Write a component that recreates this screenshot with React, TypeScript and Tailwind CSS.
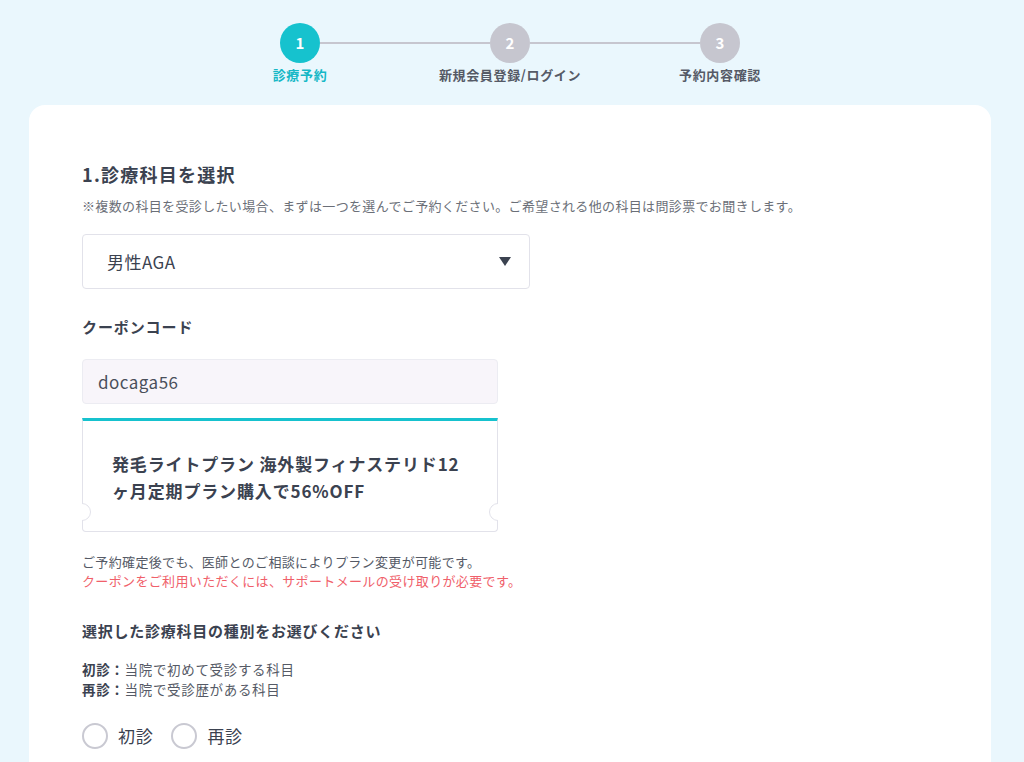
import { useState } from "react";

const FONT = { fontFamily: '"Noto Sans CJK JP", "Noto Sans", sans-serif' };

const STEPS = ["診療予約", "新規会員登録/ログイン", "予約内容確認"];

function Stepper() {
  return (
    <div className="pt-[23px] pb-[20px]">
      <div className="flex items-center ml-[280px] w-[460px]">
        {STEPS.map((_, i) => (
          <div key={i} className={`flex items-center ${i < 2 ? "flex-1" : ""}`}>
            <div
              className={`w-[40px] h-[40px] rounded-full flex items-center justify-center text-white font-bold text-[15px] ${
                i === 0 ? "bg-[#16c2ce]" : "bg-[#c6c6cf]"
              }`}
            >
              {i + 1}
            </div>
            {i < 2 && <div className="flex-1 h-[2px] bg-[#c6c6cf]" />}
          </div>
        ))}
      </div>
      <div className="flex ml-[195px] mt-[2px]">
        {STEPS.map((s, i) => (
          <div
            key={s}
            className={`w-[210px] text-center text-[13px] font-bold leading-[20px] tracking-[0.05em] ${
              i === 0 ? "text-[#16b8c6]" : "text-[#555a66]"
            }`}
          >
            {s}
          </div>
        ))}
      </div>
    </div>
  );
}

function Notch({ side }: { side: "left" | "right" }) {
  return (
    <span
      className={`absolute top-[82px] w-[18px] h-[18px] rounded-full border border-[#e2e2ea] bg-white ${
        side === "left"
          ? "left-[-10px] [clip-path:inset(0_0_0_50%)]"
          : "right-[-10px] [clip-path:inset(0_50%_0_0)]"
      }`}
    />
  );
}

function Radio({ label, checked, onClick }: { label: string; checked: boolean; onClick: () => void }) {
  return (
    <button onClick={onClick} className="flex items-center gap-[10px]">
      <span className="w-[26px] h-[26px] rounded-full border-2 border-[#c9c9d2] bg-white flex items-center justify-center">
        {checked && <span className="w-[12px] h-[12px] rounded-full bg-[#16c2ce]" />}
      </span>
      <span className="text-[17px] text-[#3b4250] leading-[26px] tracking-[0.04em]">{label}</span>
    </button>
  );
}

export default function App() {
  const [visit, setVisit] = useState<"first" | "return" | null>(null);

  return (
    <div className="min-h-[762px] bg-[#eaf7fd] overflow-hidden" style={FONT}>
      <Stepper />
      <div className="ml-[29px] w-[962px] bg-white rounded-t-2xl pl-[53px] pt-[57px] pb-[40px] text-[#3b4250] tracking-[0.03em]">
        <h2 className="text-[18px] font-bold leading-[24px] tracking-[0.07em]">1.診療科目を選択</h2>
        <p className="mt-[10px] text-[13px] leading-[20px] text-[#6b6f78] tracking-[0.027em]">
          ※複数の科目を受診したい場合、まずは一つを選んでご予約ください。ご希望される他の科目は問診票でお聞きします。
        </p>

        <div className="mt-[18px] w-[448px] h-[55px] border border-[#e2e2ea] rounded-[4px] flex items-center justify-between pl-[24px] pr-[18px]">
          <span className="text-[17px]">男性AGA</span>
          <svg width="12" height="9" viewBox="0 0 12 9">
            <path d="M0 0 H12 L6 9 Z" fill="#3b4250" />
          </svg>
        </div>

        <div className="mt-[27px] text-[15px] font-bold leading-[22px] tracking-[0.06em]">クーポンコード</div>

        <div className="mt-[21px] w-[416px] h-[45px] bg-[#f8f5fa] border border-[#ececf2] rounded-[4px] flex items-center pl-[15px] text-[17px] text-[#4a4f5a]">
          docaga56
        </div>

        <div className="relative mt-[14px] w-[416px] h-[114px] border border-[#e2e2ea] border-t-[3px] border-t-[#16c2ce] rounded-b-[4px] pl-[29px] pt-[29px]">
          <p className="text-[17px] font-bold leading-[27px] w-[360px] tracking-[0.05em]">
            発毛ライトプラン 海外製フィナステリド12ヶ月定期プラン購入で56%OFF
          </p>
          <Notch side="left" />
          <Notch side="right" />
        </div>

        <p className="mt-[20px] text-[13px] leading-[19px] text-[#555a66] tracking-[0.027em]">
          ご予約確定後でも、医師とのご相談によりプラン変更が可能です。
        </p>
        <p className="text-[13px] leading-[19px] text-[#f0606a] tracking-[0.027em]">
          クーポンをご利用いただくには、サポートメールの受け取りが必要です。
        </p>

        <h3 className="mt-[30px] text-[15px] font-bold leading-[22px] tracking-[0.05em]">
          選択した診療科目の種別をお選びください
        </h3>

        <div className="mt-[17px] text-[13.5px] leading-[20px] text-[#555a66] tracking-[0.05em]">
          <p>
            <span className="font-bold text-[#3b4250]">初診：</span>当院で初めて受診する科目
          </p>
          <p>
            <span className="font-bold text-[#3b4250]">再診：</span>当院で受診歴がある科目
          </p>
        </div>

        <div className="mt-[24px] flex items-center gap-[18px]">
          <Radio label="初診" checked={visit === "first"} onClick={() => setVisit("first")} />
          <Radio label="再診" checked={visit === "return"} onClick={() => setVisit("return")} />
        </div>
      </div>
    </div>
  );
}
